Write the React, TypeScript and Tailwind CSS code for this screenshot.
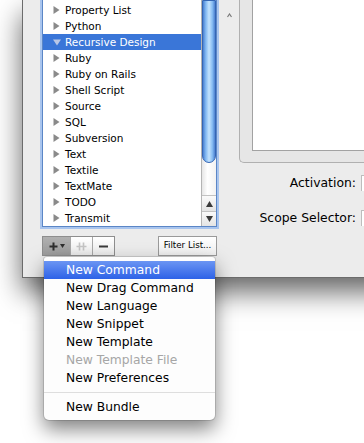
import React from 'react'

const bundles = [
  'Property List',
  'Python',
  'Recursive Design',
  'Ruby',
  'Ruby on Rails',
  'Shell Script',
  'Source',
  'SQL',
  'Subversion',
  'Text',
  'Textile',
  'TextMate',
  'TODO',
  'Transmit',
]

const menuItems: { label: string; disabled?: boolean }[] = [
  { label: 'New Command' },
  { label: 'New Drag Command' },
  { label: 'New Language' },
  { label: 'New Snippet' },
  { label: 'New Template' },
  { label: 'New Template File', disabled: true },
  { label: 'New Preferences' },
]

const Disclosure: React.FC<{ open?: boolean }> = ({ open }) =>
  open ? (
    <svg width="8" height="7" viewBox="0 0 8 7" className="shrink-0">
      <path d="M0 0.5 L8 0.5 L4 6.5 Z" fill="#b9c7e6" />
    </svg>
  ) : (
    <svg width="7" height="8" viewBox="0 0 7 8" className="shrink-0">
      <path d="M0.5 0 L6.5 4 L0.5 8 Z" fill="#8a8a8a" />
    </svg>
  )

const BundleList: React.FC = () => (
  <div className="flex h-[227px] w-[175px] border-x border-b border-[#5b86c6] bg-white shadow-[0_0_0_2px_#a9c5ee]">
    <div className="flex-1 pt-[2px]">
      {bundles.map((name) => {
        const selected = name === 'Recursive Design'
        return (
          <div
            key={name}
            className={`flex h-[16px] items-center gap-[4px] pl-[10px] text-[10.5px] ${
              selected ? 'bg-[#3a76d8] text-white' : 'text-black'
            }`}
          >
            <span className="flex w-[8px] justify-start">
              <Disclosure open={selected} />
            </span>
            <span className="leading-none">{name}</span>
          </div>
        )
      })}
    </div>
    <div className="flex w-[15px] flex-col border-l border-[#b4b4b4] bg-[linear-gradient(90deg,#e6e6e6,#ffffff_40%,#f2f2f2)]">
      <div className="h-[163px] rounded-b-[7px] border border-[#3566b4] bg-[linear-gradient(90deg,#4a7fcf_0%,#7fb6f1_22%,#c4e3fd_50%,#86bcf3_78%,#4c80d0_100%)]" />
      <div className="mt-auto flex h-[16px] items-center justify-center border-t border-[#c2c2c2] bg-[linear-gradient(180deg,#fafafa,#e4e4e4)]">
        <svg width="7" height="6" viewBox="0 0 7 6">
          <path d="M3.5 0 L7 6 L0 6 Z" fill="#3a3a3a" />
        </svg>
      </div>
      <div className="flex h-[15px] items-center justify-center border-t border-[#c2c2c2] bg-[linear-gradient(180deg,#fafafa,#e4e4e4)]">
        <svg width="7" height="6" viewBox="0 0 7 6">
          <path d="M0 0 L7 0 L3.5 6 Z" fill="#3a3a3a" />
        </svg>
      </div>
    </div>
  </div>
)

const ButtonRow: React.FC = () => (
  <div className="mt-[9px] flex h-[20px] items-stretch">
    <div className="flex border border-[#8e8e8e]">
      <div className="flex w-[27px] items-center justify-center gap-[2px] bg-[linear-gradient(180deg,#b0b0b0,#9c9c9c)]">
        <svg width="9" height="9" viewBox="0 0 9 9">
          <path d="M4.5 0.5 V8.5 M0.5 4.5 H8.5" stroke="#2e2e2e" strokeWidth="2" />
        </svg>
        <svg width="5" height="4" viewBox="0 0 5 4">
          <path d="M0 0 L5 0 L2.5 4 Z" fill="#2e2e2e" />
        </svg>
      </div>
      <div className="flex w-[22px] items-center justify-center border-l border-[#a8a8a8] bg-[linear-gradient(180deg,#ffffff,#ececec)]">
        <svg width="11" height="9" viewBox="0 0 11 9">
          <path d="M3.5 0.5 V8.5 M7.5 0.5 V8.5 M0.5 4.5 H10.5" stroke="#c4c4c4" strokeWidth="1.6" />
        </svg>
      </div>
      <div className="flex w-[22px] items-center justify-center border-l border-[#a8a8a8] bg-[linear-gradient(180deg,#ffffff,#ececec)]">
        <svg width="9" height="3" viewBox="0 0 9 3">
          <path d="M0 1.5 H9" stroke="#3a3a3a" strokeWidth="2" />
        </svg>
      </div>
    </div>
    <div className="ml-auto flex w-[59px] items-center justify-center border border-[#9a9a9a] bg-[linear-gradient(180deg,#ffffff,#f0f0f0)] text-[8.7px] text-black">
      Filter List...
    </div>
  </div>
)

const ActionMenu: React.FC = () => (
  <div className="absolute left-[44px] top-[257px] w-[171px] rounded-t-[3px] rounded-b-[5px] bg-[#fdfdfd] py-[4px] text-[12.3px] shadow-[0_0_0_1px_rgba(0,0,0,0.12),0_9px_20px_rgba(0,0,0,0.5)]">
    {menuItems.map((item, i) => (
      <div
        key={item.label}
        className={`flex h-[18px] items-center pl-[22px] leading-none ${
          i === 0
            ? 'bg-[linear-gradient(180deg,#6b95f3,#2d62e7)] text-white'
            : item.disabled
              ? 'text-[#a6a6a6]'
              : 'text-black'
        }`}
      >
        {item.label}
      </div>
    ))}
    <div className="my-[5px] h-px bg-[#dedede]" />
    <div className="flex h-[18px] items-center pl-[22px] leading-none text-black">
      New Bundle
    </div>
  </div>
)

const FormRow: React.FC<{ label: string; className?: string }> = ({
  label,
  className,
}) => (
  <div className={`flex h-[18px] items-center ${className ?? ''}`}>
    <span className="w-[117px] text-right text-[12.4px] leading-none text-black">
      {label}
    </span>
    <div className="ml-[5px] h-[16px] w-[120px] border-l border-t border-[#bdbdbd] bg-white" />
  </div>
)

export default function App() {
  return (
    <div
      className="relative h-[443px] w-[364px] overflow-hidden bg-white"
      style={{ fontFamily: '"DejaVu Sans", "Liberation Sans", sans-serif' }}
    >
      <div className="ml-[22px] flex h-[278px] w-[420px] border-b border-l border-[#6c6c6c] bg-[#ececec] shadow-[0_14px_26px_rgba(0,0,0,0.6)]">
        <div className="flex w-[216px] shrink-0">
          <div className="ml-[19px] flex flex-col">
            <BundleList />
            <ButtonRow />
          </div>
          <svg width="5" height="5" viewBox="0 0 5 5" className="ml-[10px] mt-[13px]">
            <path d="M0.5 4 L2.5 1 L4.5 4" stroke="#7a7a7a" strokeWidth="1.2" fill="none" />
          </svg>
        </div>
        <div className="flex flex-1 flex-col">
          <div className="h-[163px] rounded-bl-[5px] border-b border-l border-[#b0b0b0] bg-[#e6e6e6] pb-[11px] pl-[12px]">
            <div className="h-full border-b border-l border-[#a2a2a2] bg-white" />
          </div>
          <FormRow label="Activation:" className="mt-[11px]" />
          <FormRow label="Scope Selector:" className="mt-[17px]" />
        </div>
      </div>
      <ActionMenu />
    </div>
  )
}
